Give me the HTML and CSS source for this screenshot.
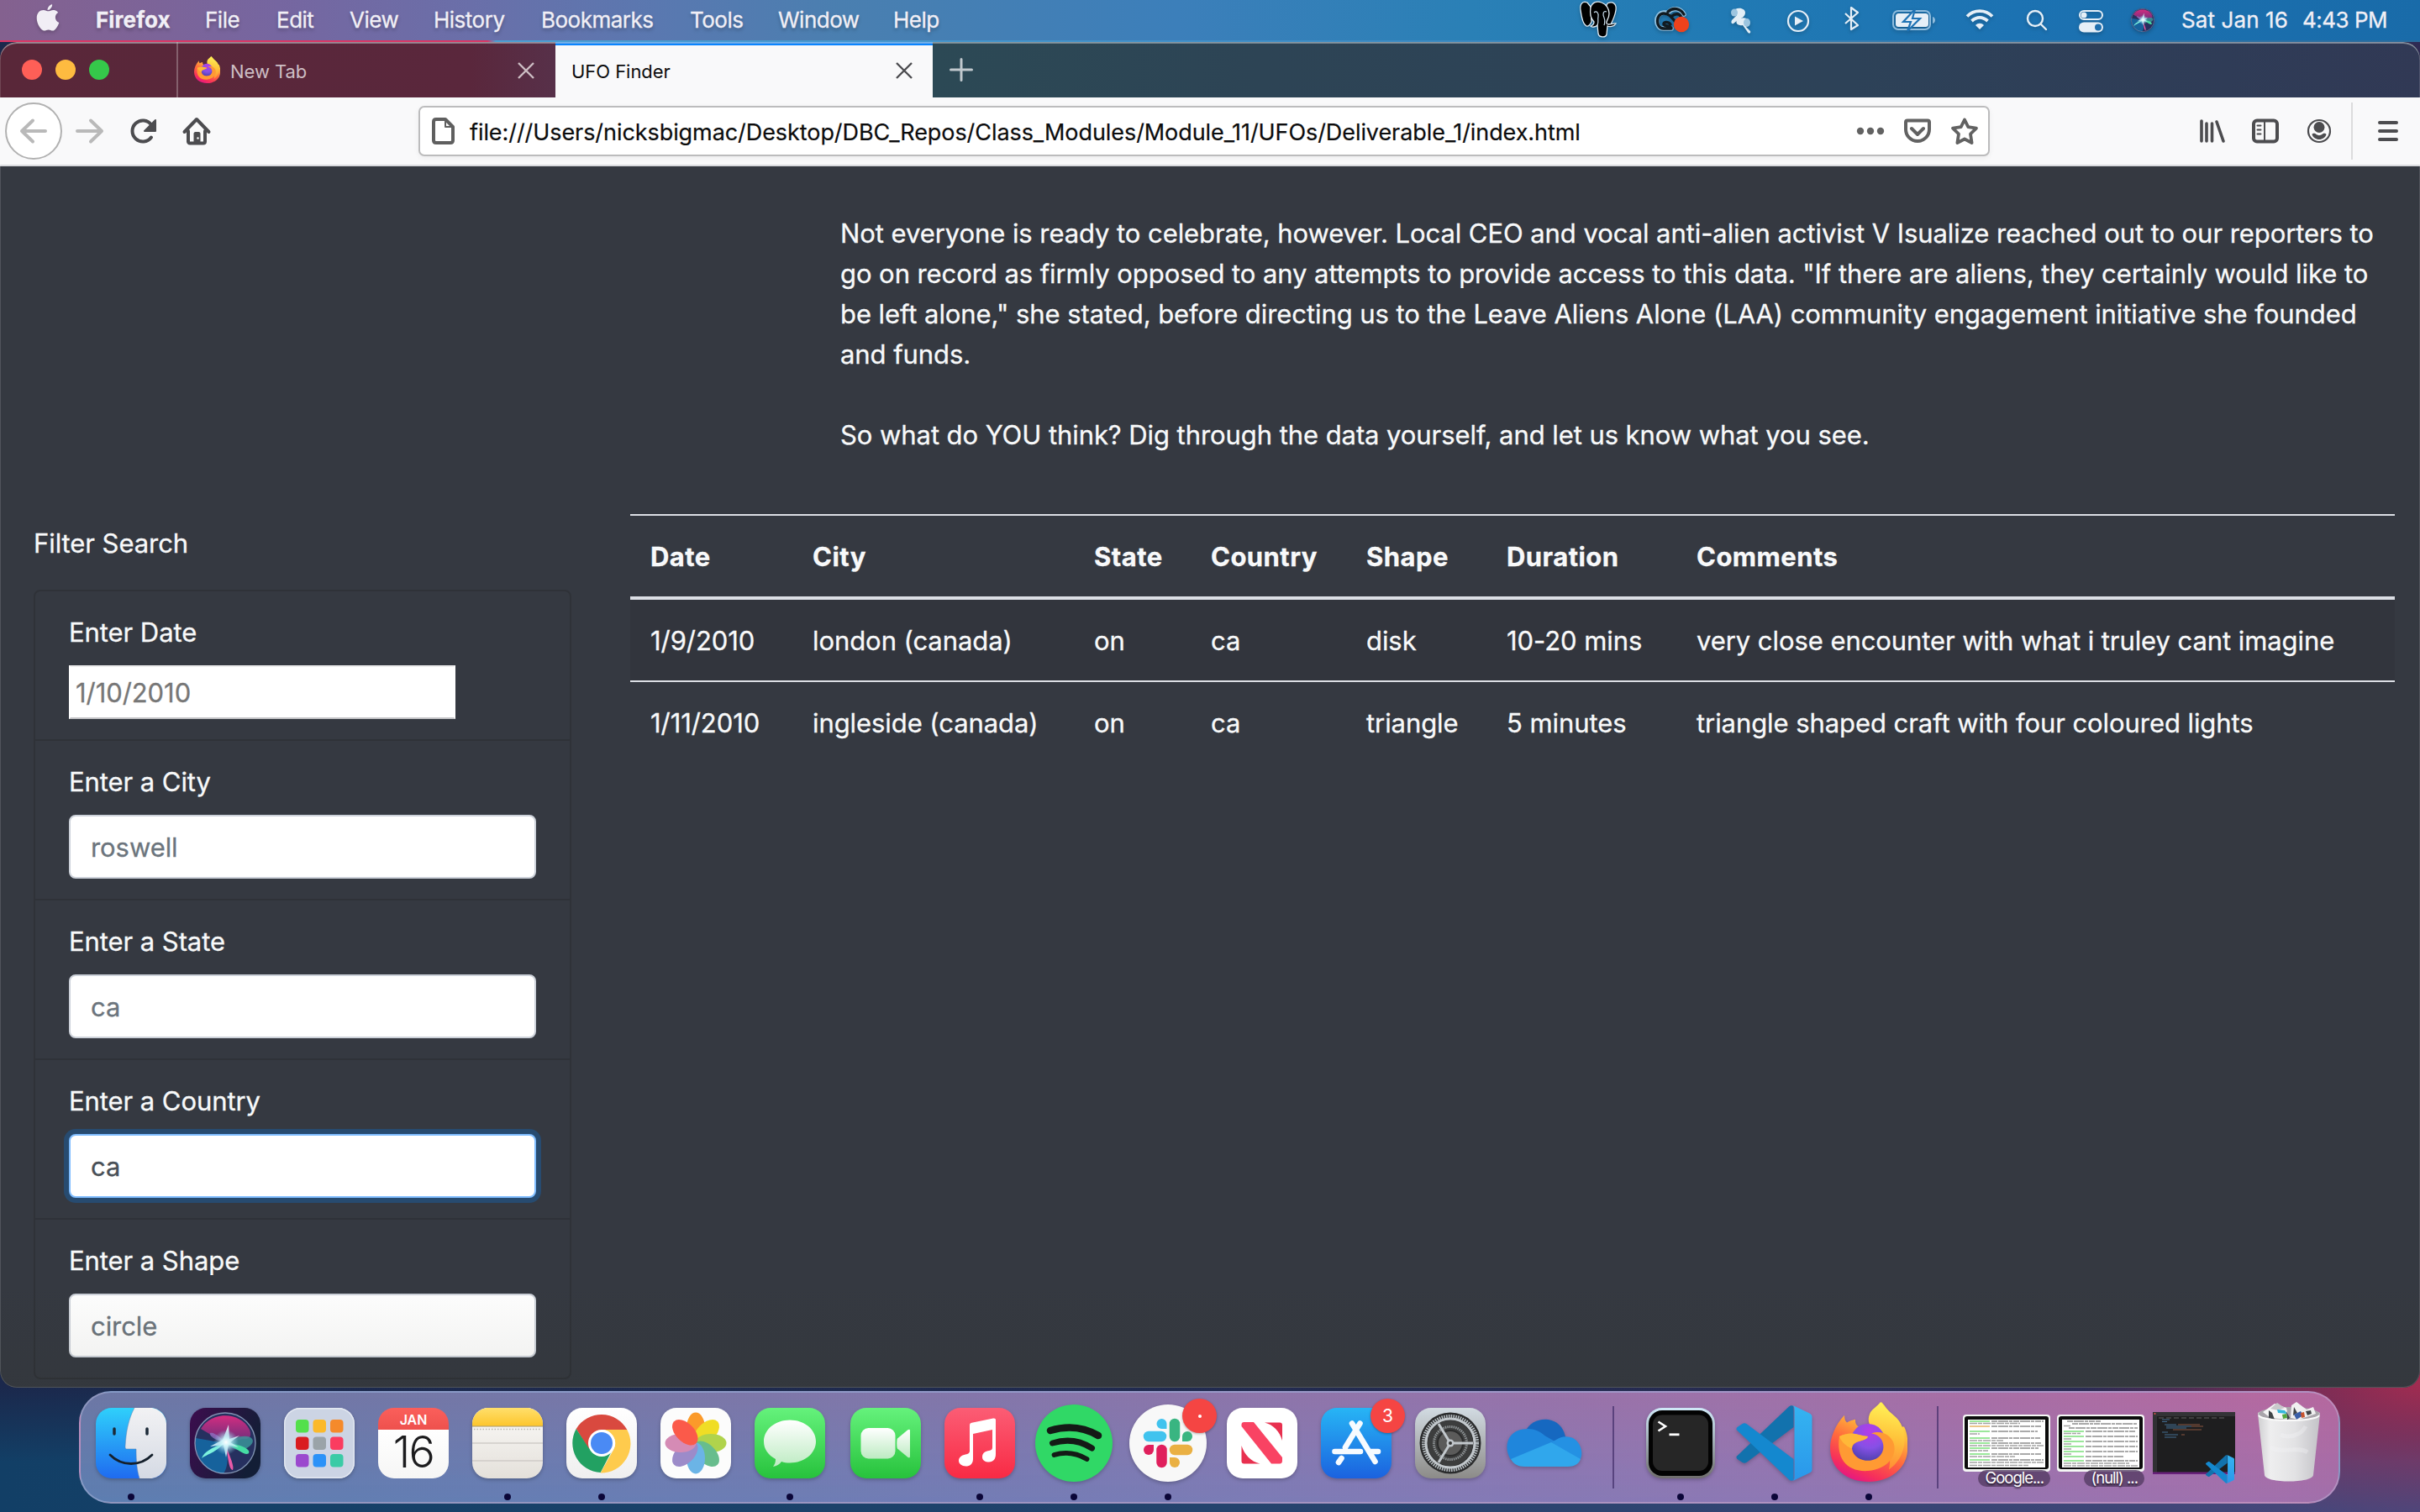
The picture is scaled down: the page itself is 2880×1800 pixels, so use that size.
FILE: index.html
```html
<!DOCTYPE html>
<html lang="en">
<head>
<meta charset="utf-8">
<title>UFO Finder</title>
<link rel="stylesheet" href="styles.css">
</head>
<body>

<!-- Shared artwork -->
<svg class="defs" width="0" height="0" aria-hidden="true">
  <defs>
    <linearGradient id="ffBody" x1=".75" y1="0" x2=".3" y2="1"><stop offset="0" stop-color="#fff14e"/><stop offset=".3" stop-color="#ffbd3a"/><stop offset=".58" stop-color="#ff6b3c"/><stop offset=".85" stop-color="#f62f5b"/><stop offset="1" stop-color="#e31587"/></linearGradient>
    <linearGradient id="ffTail" x1=".6" y1="0" x2=".5" y2="1"><stop offset="0" stop-color="#fff55a"/><stop offset=".5" stop-color="#ffc53b"/><stop offset="1" stop-color="#ff8a35"/></linearGradient>
    <radialGradient id="ffGlobe" cx=".55" cy=".2" r=".9"><stop offset="0" stop-color="#b53ce8"/><stop offset=".5" stop-color="#8650e6"/><stop offset="1" stop-color="#3f3d9e"/></radialGradient>
    <linearGradient id="vsLight" x1="0" y1="0" x2="0" y2="1"><stop offset="0" stop-color="#35b4f1"/><stop offset="1" stop-color="#2a97ea"/></linearGradient>
    <radialGradient id="siriGlow" cx=".5" cy=".5" r=".5"><stop offset="0" stop-color="#fff"/><stop offset=".35" stop-color="#c9f4fa" stop-opacity=".85"/><stop offset="1" stop-color="#7fc6e6" stop-opacity="0"/></radialGradient>
    <linearGradient id="siriPink" x1="0" y1="0" x2="0" y2="1"><stop offset="0" stop-color="#d62c80"/><stop offset="1" stop-color="#8a2f86" stop-opacity=".7"/></linearGradient>
    <symbol id="firefox" viewBox="0 0 92 132" preserveAspectRatio="none">
      <path fill="url(#ffBody)" d="M17 22c0 6 1 10 3 12 3-2 6-4 10-5 0 4 0 7 2 10l7 8 17 3 10-16c-6-5-12-14-9-20C57 10 60 4 61 0c5 7 7 14 14 22 6 6 9 13 10 19l3 0c4 10 5 24 4 40-1 28-20 51-46 51C20 132 0 110 0 76 0 60 6 38 17 22z"/>
      <path fill="url(#ffTail)" d="M60 0c7 16 22 24 26 42 6 22 2 52-16 70 4-24-2-52-14-62-10-8-12-20-9-30C49 12 56 8 60 0z"/>
      <ellipse cx="45" cy="67" rx="21" ry="31" fill="url(#ffGlobe)"/>
      <path fill="#ff9a33" d="M11 57c6-4 13-6 20-4 4 1 8 3 14 4-1 5-6 6-10 8-5 2-9 6-9 12 1 14 11 20 19 20 15-1 20-16 18-28-1-9-7-16-14-17 12-6 22 2 26 14 6 20-5 45-30 48C19 116 7 92 11 57z"/>
      <path fill="#ffb838" d="M11 57c6-4 13-6 20-4 4 1 8 3 14 4-1 5-6 6-10 8-6 2-9 5-9 12-8-4-13-12-15-20z"/>
    </symbol>
    <symbol id="vscode" viewBox="0 0 90 90">
      <path fill="#1272ad" d="M0 61 62 2c2-2 4-2 6-1v25L12 68c-2 1-3 1-5 0l-6-4c-1-1-1-2-1-3z"/>
      <path fill="#1488cf" d="M0 29c0-1 0-2 1-3l6-4c2-1 3-1 5 0l56 42v25c-2 1-4 1-6-1z"/>
      <path fill="url(#vsLight)" d="M67 0l19 9c3 1 4 3 4 5v62c0 2-1 4-4 5l-19 9c1-1 2-2 2-4V4c0-2-1-3-2-4z"/>
    </symbol>
    <symbol id="siri" viewBox="0 0 84 84">
      <circle cx="42" cy="42" r="36" fill="#26305f"/>
      <path d="M13 25C25 4 60 4 71 26c3 8 0 12-8 11L42 42z" fill="url(#siriPink)"/>
      <path d="M42 42 7 36C5 60 20 77 40 78c6-8 6-24 2-36z" fill="#1273b0" opacity=".75"/>
      <path d="M42 42c10-8 28-11 32-5s-8 12-10 13c-7 2-16-3-22-8z" fill="#3c9a9c" opacity=".8"/>
      <path d="M42 41c10 2 24 4 28 10 2 6-6 4-10 1z" fill="#46dca4"/>
      <path d="M42 41c2 10 12 28 9 33-5 0-6-20-9-33z" fill="#e85aa8"/>
      <path d="M42 41C30 54 22 54 14 60c4-10 18-14 28-19z" fill="#7cf2dd"/>
      <path d="M42 41C30 28 22 28 24 32c3 5 10 7 18 9z" fill="#8d6fc0" opacity=".8"/>
      <path d="M46 20l1 17 12-4-11 8 10 6-12-3-3 15-3-15-16 2 15-8z" fill="#e3fbff" opacity=".85"/>
      <circle cx="43" cy="41" r="15" fill="url(#siriGlow)"/>
      <circle cx="42" cy="42" r="36" fill="none" stroke="#a9c2dd" stroke-opacity=".7" stroke-width="1.400"/>
    </symbol>
  </defs>
</svg>

<!-- Menu bar -->
<header class="menubar">
  <svg class="mi" width="114" height="48" viewBox="1 0 114 48" fill="#f1eef5"><path d="M59.500 12c-1-3 1-6 3-7l0-1c0 4-2 7-3 8zM58.500 13.300c2 0 4.500-2.200 8-1 1.500.5 2.800 1.400 3.600 2.600-4.800 3-4 10 1.200 12-1.600 4.600-4.600 9.700-7.600 9.700-2 0-2.600-1.200-5-1.200s-3.200 1.200-5 1.200c-3.600 0-9-8-9-15.200 0-6.400 4-9.500 8-9.500 2.400 0 4.300 1.500 5.800 1.400zM57.500 12c0-3.400 2.800-6.400 5.600-6.700.3 3.500-2.600 6.500-5.600 6.700z"/></svg>
  <nav class="menus">
    <b>Firefox</b><span>File</span><span>Edit</span><span>View</span><span>History</span><span>Bookmarks</span><span>Tools</span><span>Window</span><span>Help</span>
  </nav>
  <div class="extras">
    <svg class="mi" width="70" height="50" viewBox="1870 0 70 50"><g fill="#000" stroke="#e3edf4" stroke-width="1.300"><path d="M1889 3c-6-2-9 2-8 9 1 8 3 17 7 19 3 1 5-3 6-5l-1-18z"/><path d="M1913 4c7-3 11 1 10 8s-4 13-6 17l-5 1-3-17z"/><path d="M1893 9c2-7 8-8 13-6 6 2 9 8 9 13 0 7-4 8-3 12 2 3 7-1 11 0-2 4-8 4-10 3l-1 10c-1 4-9 4-10-1l-1-10c-2 2-6 3-8 1 3-1 4-3 4-5-4-4-5-11-4-17z"/></g><path d="M1897 15c3-3 6 1 5 5s1 5-1 10M1912 14c-4-2-5 3-3 7s1 5 0 9" fill="none" stroke="#c7dceb" stroke-width="1.200"/></svg>
    <svg class="mi" width="100" height="50" viewBox="1940 0 100 50"><g fill="none" stroke-linecap="round"><path d="M1989 34h-9c-11 0-11-18 0-19h5c6-7 15-5 19 2" stroke="#8fc0e0" stroke-width="5.500"/><path d="M1989 34h-9c-10 0-10-18 0-18 6 0 9 4 13 9M1988 29c-3-4-9-3-8 0 2 3 5 0 9 4M1985 14c6-6 15-4 19 3M1990 19c3-3 8-3 10 0" stroke="#111a20" stroke-width="3.400"/></g><circle cx="2001" cy="29" r="9.200" fill="#ee421c"/></svg>
    <svg class="mi" width="64" height="50" viewBox="2040 0 64 50" fill="#e2eef6"><path d="M2065 11c6-3 12 0 12 4 0 5-5 7-9 9l-5 4c-3 1-3-2-2-4l6-6z"/><ellipse cx="2064" cy="15" rx="4" ry="4.500" fill="#9cc5e0"/><path d="M2067 24c5-4 12-3 14 0l-3 8 5 5c1 3-2 4-4 0l-5-7c-6 1-9-2-7-6z"/><ellipse cx="2079" cy="27" rx="4" ry="5" fill="#9cc5e0"/></svg>
    <svg class="mi" width="72" height="50" viewBox="2104 0 72 50"><circle cx="2140" cy="25" r="12" fill="none" stroke="#e6eff7" stroke-width="2.200"/><path d="M2136 19.500v11l10-5.500z" fill="#e6eff7"/></svg>
    <svg class="mi" width="56" height="50" viewBox="2176 0 56 50"><path d="M2196 16l15 14-8 5V9l8 6-15 13" fill="none" stroke="#e6eff7" stroke-width="2.200" stroke-linejoin="round"/></svg>
    <svg class="mi" width="88" height="50" viewBox="2232 0 88 50"><rect x="2253" y="13" width="44" height="22" rx="6" fill="none" stroke="#8fbcdd" stroke-width="2"/><path d="M2300 20c4 1 4 7 0 8z" fill="#8fbcdd"/><rect x="2256" y="16" width="39" height="16" rx="3.500" fill="#e6eff7"/><path d="M2279 11l-14 15h9l-4 11 15-15h-9z" fill="#e6eff7" stroke="#1f73b4" stroke-width="2.200"/></svg>
    <svg class="mi" width="70" height="50" viewBox="2320 0 70 50"><g fill="none" stroke="#e6eff7" stroke-width="3.800"><path d="M2341 19.500c8-8.500 22-8.500 30 0"/><path d="M2346.500 25c6-5.500 13-5.500 19 0"/></g><path d="M2351 30c3-3 7-3 10 0l-5 5z" fill="#e6eff7"/></svg>
    <svg class="mi" width="60" height="50" viewBox="2390 0 60 50" fill="none" stroke="#e6eff7" stroke-width="2.400" stroke-linecap="round"><circle cx="2422" cy="22" r="9"/><path d="M2429 29l6 6"/></svg>
    <svg class="mi" width="70" height="50" viewBox="2450 0 70 50"><rect x="2475" y="13" width="27" height="10" rx="5" fill="none" stroke="#e6eff7" stroke-width="2"/><circle cx="2480" cy="18" r="3.500" fill="#e6eff7"/><rect x="2474" y="26.500" width="29" height="12" rx="6" fill="#e6eff7"/><circle cx="2497" cy="32.500" r="4" fill="#1f6fae"/></svg>
    <svg class="mi" width="76" height="50" viewBox="2520 0 76 50"><circle cx="2550" cy="24" r="14" fill="#2b2350"/><use href="#siri" x="2534" y="8" width="32" height="32"/></svg>
    <time class="clock"><span>Sat Jan 16</span><span>4:43 PM</span></time>
  </div>
</header>
<div class="wallstrip"></div>

<!-- Browser window -->
<main class="window">
  <div class="tabbar">
    <div class="lights"><i class="red"></i><i class="amber"></i><i class="green"></i></div>
    <div class="tab">
      <svg width="31" height="32"><use href="#firefox" width="31" height="32"/></svg>
      <span>New Tab</span>
      <svg class="close" width="20" height="20" viewBox="0 0 20 20"><path d="M1 1l18 18M19 1L1 19"/></svg>
    </div>
    <div class="tab active">
      <span>UFO Finder</span>
      <svg class="close" width="20" height="20" viewBox="0 0 20 20"><path d="M1 1l18 18M19 1L1 19"/></svg>
    </div>
    <svg class="plus" width="28" height="28" viewBox="0 0 28 28"><path d="M14 1.500v25M1.500 14h25"/></svg>
  </div>

  <div class="toolbar">
    <svg width="498" height="80" viewBox="0 116 498 80" fill="none" stroke-linecap="round" stroke-linejoin="round">
      <circle cx="40" cy="156" r="33" fill="#fff" stroke="#b1b1b1" stroke-width="2"/>
      <path d="M54 156H26M39 143.500L26 156l13 12.500" stroke="#b9b9b9" stroke-width="4"/>
      <path d="M92 156h28M108 143.500l13 12.500-13 12.500" stroke="#b9b9b9" stroke-width="4"/>
      <path d="M180 163.500a12.500 12.500 0 1 1 0-15" stroke="#4c4c4f" stroke-width="4"/><path d="M185 143v13h-13z" fill="#4c4c4f" stroke="#4c4c4f" stroke-width="2"/>
      <path d="M219.500 157L234 142l14.500 15M224 156v12.500c0 1 .8 2 2 2h16c1.200 0 2-.8 2-2V156" stroke="#4c4c4f" stroke-width="4"/><path d="M230.500 171v-12c0-1 .8-2 2-2h4c1 0 2 .8 2 2v12z" fill="#4c4c4f"/><circle cx="235.500" cy="164.500" r="1.200" fill="#f9f9fa"/>
    </svg>
    <div class="urlbar">
      <svg width="32" height="36" viewBox="0 0 32 36" fill="none" stroke="#5f5f5f" stroke-width="4" stroke-linejoin="round"><path d="M7 4h11l9 9v16c0 2-1 3-3 3H7c-2 0-3-1-3-3V7c0-2 1-3 3-3z"/><path d="M18 4v9h9" stroke-width="2"/></svg>
      <span class="url">file:///Users/nicksbigmac/Desktop/DBC_Repos/Class_Modules/Module_11/UFOs/Deliverable_1/index.html</span>
      <svg width="158" height="56" viewBox="2208 128 158 56" fill="none" stroke="#626262" stroke-width="4" stroke-linejoin="round" stroke-linecap="round">
        <g fill="#626262" stroke="none"><circle cx="2214" cy="156" r="4.200"/><circle cx="2226" cy="156" r="4.200"/><circle cx="2238" cy="156" r="4.200"/></g>
        <path d="M2270 143.500h24c1.500 0 2 .5 2 2V154a14 14 0 0 1-28 0v-8.500c0-1.500.5-2 2-2z"/><path d="M2275 153l7 7 7-7"/>
        <path d="M2338 142.500l4.300 8.700 9.700 1.400-7 6.900 1.600 10.500-8.600-4.500-8.600 4.500 1.600-10.500-7-6.900 9.700-1.400z" stroke-width="3.800"/>
      </svg>
    </div>
    <svg width="512" height="80" viewBox="2368 116 512 80" fill="none" stroke="#4c4c4f" stroke-linecap="round" stroke-linejoin="round">
      <path d="M2620 144v24M2626 147v21M2632.500 147v21M2638 145l8 23" stroke-width="3.600"/>
      <rect x="2682" y="143.500" width="28" height="25" rx="4" stroke-width="4"/><path d="M2695 144v24M2686.500 149.500h4M2686.500 154.500h4M2686.500 159.500h4" stroke-width="2"/>
      <circle cx="2760" cy="156" r="13" stroke-width="2.200"/><circle cx="2760" cy="151.500" r="6.500" fill="#4c4c4f" stroke="none"/><path d="M2751.500 160c1.500-2 4-1 5 0 2 1.500 5 1.500 7 0 1-1 3.500-2 5 0-1 3.500-4.500 6-8.500 6s-7.500-2.500-8.500-6z" fill="#4c4c4f" stroke="none"/>
      <path d="M2799 122v68" stroke="#dcdcdd" stroke-width="2" stroke-linecap="butt"/>
      <path d="M2832 146h20M2832 156h20M2832 166h20" stroke-width="4"/>
    </svg>
  </div>

  <div class="page">
    <article class="story">
      <p>Not everyone is ready to celebrate, however. Local CEO and vocal anti-alien activist V Isualize reached out to our reporters to<br>go on record as firmly opposed to any attempts to provide access to this data. "If there are aliens, they certainly would like to<br>be left alone," she stated, before directing us to the Leave Aliens Alone (LAA) community engagement initiative she founded<br>and funds.</p>
      <p>So what do YOU think? Dig through the data yourself, and let us know what you see.</p>
    </article>

    <div class="results">
      <form class="filters">
        <p class="heading">Filter Search</p>
        <ul class="list">
          <li><label for="date">Enter Date</label><input class="plain" id="date" type="text" placeholder="1/10/2010"></li>
          <li><label for="city">Enter a City</label><input class="control" id="city" type="text" placeholder="roswell"></li>
          <li><label for="state">Enter a State</label><input class="control" id="state" type="text" placeholder="ca"></li>
          <li><label for="country">Enter a Country</label><input class="control focused" id="country" type="text" value="ca"></li>
          <li><label for="shape">Enter a Shape</label><input class="control" id="shape" type="text" placeholder="circle"></li>
        </ul>
      </form>
      <table class="sightings">
        <colgroup><col class="c1"><col class="c2"><col class="c3"><col class="c4"><col class="c5"><col class="c6"><col></colgroup>
        <thead><tr><th>Date</th><th>City</th><th>State</th><th>Country</th><th>Shape</th><th>Duration</th><th>Comments</th></tr></thead>
        <tbody>
          <tr><td>1/9/2010</td><td>london (canada)</td><td>on</td><td>ca</td><td>disk</td><td>10-20 mins</td><td>very close encounter with what i truley cant imagine</td></tr>
          <tr><td>1/11/2010</td><td>ingleside (canada)</td><td>on</td><td>ca</td><td>triangle</td><td>5 minutes</td><td>triangle shaped craft with four coloured lights</td></tr>
        </tbody>
      </table>
    </div>
  </div>
</main>

<!-- Dock -->
<footer class="desk">
  <div class="dock">
    <div class="app running"><svg viewBox="0 0 84 84">
      <defs><linearGradient id="fb" x2="0" y2="1"><stop stop-color="#2fd0fb"/><stop offset="1" stop-color="#1f6bf0"/></linearGradient><linearGradient id="fw" x2="0" y2="1"><stop stop-color="#f2f2f4"/><stop offset="1" stop-color="#d5dae4"/></linearGradient></defs>
      <rect width="84" height="84" rx="19" fill="url(#fb)"/><path d="M46 0h19c10 0 19 9 19 19v46c0 10-9 19-19 19H52c-3-10-4-20-4-35H36c-1-1-1-2-1-3 1-18 4-33 11-46z" fill="url(#fw)"/>
      <path d="M46 0c-7 13-10 28-11 46 0 2 0 3 2 3h11c0 15 1 25 4 35" fill="none" stroke="#5a7fae" stroke-opacity=".5"/>
      <path d="M22 25v6M61 25v6" stroke="#1c2a38" stroke-width="3.500" stroke-linecap="round"/><path d="M17 56c14 14 36 14 50 0" fill="none" stroke="#15202c" stroke-width="2.800" stroke-linecap="round"/></svg></div>
    <div class="app"><svg viewBox="0 0 84 84"><defs><linearGradient id="sb" x2="1" y2=".4"><stop stop-color="#3c0d4e"/><stop offset="1" stop-color="#131e36"/></linearGradient></defs><rect width="84" height="84" rx="19" fill="url(#sb)"/><use href="#siri" width="84" height="84"/></svg></div>
    <div class="app"><svg viewBox="0 0 84 84"><rect width="84" height="84" rx="19" fill="#ccd4e4"/><rect x=".7" y=".7" width="82.600" height="82.600" rx="18.500" fill="none" stroke="#e4e9f2" stroke-width="1.400"/>
      <rect x="14" y="14" width="15.500" height="15.500" rx="4" fill="#53e04b"/><rect x="34.500" y="14" width="15.500" height="15.500" rx="4" fill="#fbb92b"/><rect x="55" y="14" width="15.500" height="15.500" rx="4" fill="#f58a2b"/>
      <rect x="14" y="34.500" width="15.500" height="15.500" rx="4" fill="#d91c20"/><rect x="34.500" y="34.500" width="15.500" height="15.500" rx="4" fill="#9aa3a8"/><rect x="55" y="34.500" width="15.500" height="15.500" rx="4" fill="#fa3c60"/>
      <rect x="14" y="55" width="15.500" height="15.500" rx="4" fill="#9b48ce"/><rect x="34.500" y="55" width="15.500" height="15.500" rx="4" fill="#2b92f8"/><rect x="55" y="55" width="15.500" height="15.500" rx="4" fill="#3acba6"/></svg></div>
    <div class="app calendar"><span class="month">JAN</span><span class="day">16</span></div>
    <div class="app running"><svg viewBox="0 0 84 84"><defs><linearGradient id="ny" x2="0" y2="1"><stop stop-color="#ffdf6b"/><stop offset="1" stop-color="#fdc52c"/></linearGradient><linearGradient id="nw" x2="0" y2="1"><stop stop-color="#fbfaf8"/><stop offset="1" stop-color="#e4e0da"/></linearGradient></defs><rect width="84" height="84" rx="19" fill="url(#nw)"/><path d="M0 22v-3C0 9 9 0 19 0h46c10 0 19 9 19 19v3z" fill="url(#ny)"/><path d="M0 22h84" stroke="#a99a70" stroke-width="1"/><path d="M2 25.500h80" stroke="#b9b6b1" stroke-width="1.600" stroke-dasharray="1.500 2"/><path d="M0 42h84M0 63h84" stroke="#cfccc8" stroke-width="1.500"/></svg></div>
    <div class="app running"><svg viewBox="0 0 84 84"><defs><linearGradient id="cw" x2="0" y2="1"><stop stop-color="#fff"/><stop offset="1" stop-color="#efefef"/></linearGradient></defs><rect width="84" height="84" rx="19" fill="url(#cw)"/>
      <path d="M11.700 25A35 35 0 0 1 72.300 26H42L27 50z" fill="#d9493f"/><path d="M11.700 25a35 35 0 0 0 29 52l14-27-28-2z" fill="#22a162"/><path d="M72.300 26a35 35 0 0 1-31.600 51.500L56 50a16 16 0 0 0-14-24z" fill="#fecb4d"/>
      <circle cx="42" cy="42" r="16" fill="#fff"/><circle cx="42" cy="42" r="13" fill="#4a8af4"/></svg></div>
    <div class="app"><svg viewBox="0 0 84 84"><rect width="84" height="84" rx="19" fill="#fcfcfc"/>
      <g class="petals"><ellipse cx="42" cy="24" rx="11" ry="18.500" fill="#fb9a2a"/><ellipse cx="42" cy="24" rx="11" ry="18.500" fill="#f0dd25" transform="rotate(45 42 42)"/><ellipse cx="42" cy="24" rx="11" ry="18.500" fill="#b0d34c" transform="rotate(90 42 42)"/><ellipse cx="42" cy="24" rx="11" ry="18.500" fill="#68bd8d" transform="rotate(135 42 42)"/><ellipse cx="42" cy="24" rx="11" ry="18.500" fill="#6bb4e6" transform="rotate(180 42 42)"/><ellipse cx="42" cy="24" rx="11" ry="18.500" fill="#9c8bc9" transform="rotate(225 42 42)"/><ellipse cx="42" cy="24" rx="11" ry="18.500" fill="#d58bb5" transform="rotate(270 42 42)"/><ellipse cx="42" cy="24" rx="11" ry="18.500" fill="#fb5a4a" transform="rotate(315 42 42)"/></g></svg></div>
    <div class="app running"><svg viewBox="0 0 84 84"><defs><linearGradient id="mg" x2="0" y2="1"><stop stop-color="#65f27c"/><stop offset="1" stop-color="#27c23c"/></linearGradient><linearGradient id="mw" x2="0" y2="1"><stop stop-color="#fff"/><stop offset="1" stop-color="#bdebc2"/></linearGradient></defs><rect width="84" height="84" rx="19" fill="url(#mg)"/><path d="M42 14.500c17 0 31 11 31 25.500S59 65.500 42 65.500c-4 0-7-.5-10-1.500-2 3-6 5.500-10 6 2-3 3-5 3-9-9-5-14-12-14-21 0-14.500 14-25.500 31-25.500z" fill="url(#mw)"/></svg></div>
    <div class="app nudge"><svg viewBox="0 0 84 84"><rect width="84" height="84" rx="19" fill="url(#mg)"/><rect x="12.500" y="24" width="41" height="36.500" rx="9" fill="url(#mw)"/><path d="M56 36.500 68 26.500c2-1.500 3-1 3 1v30c0 2-1 2.500-3 1L56 48.500c-1-1-1-11 0-12z" fill="url(#mw)"/></svg></div>
    <div class="app running"><svg viewBox="0 0 84 84"><defs><linearGradient id="mu" x2="0" y2="1"><stop stop-color="#fb5d75"/><stop offset="1" stop-color="#f92a44"/></linearGradient></defs><rect width="84" height="84" rx="19" fill="url(#mu)"/><path d="M58 12.500c2-.4 3 .3 3 2V55c0 6-3 9.500-8 9.500-4.500 0-8-2-8-6 0-5 4-7 8-7.500 3-.5 4-1.500 4-4V26L34 31v30c0 6-4 8.500-8.500 8.500-5 0-8.500-3-8.500-6.500 0-4 3-6.500 8-7.500 3-.5 5-1.500 5-4V21c0-2 .5-2.700 2.500-3.200z" fill="#fff"/></svg></div>
    <div class="app running"><svg viewBox="0 0 84 84"><circle cx="42" cy="42" r="46" fill="#30d866"/><g fill="none" stroke="#141a16" stroke-linecap="round"><path d="M14 27c20-6 40-4 57 6" stroke-width="8.500"/><path d="M16.500 42c16-5 33-3 47 6" stroke-width="7"/><path d="M18.500 56c14-4 27-2 39 5" stroke-width="5.800"/></g></svg></div>
    <div class="app running"><svg viewBox="0 0 84 84"><circle cx="42" cy="42" r="46" fill="#f8f8f8"/><g stroke-linecap="round" stroke-width="12.500"><path d="M19 34h15" stroke="#41c3ee"/><path d="M50 19v15" stroke="#39b581"/><path d="M50 50h15" stroke="#eab043"/><path d="M34.500 50v15" stroke="#e01f5c"/></g><path d="M40.500 25v-6a6 6 0 1 0-6 6z" fill="#41c3ee"/><path d="M59 40h6a6 6 0 1 0-6-6z" fill="#39b581"/><path d="M44 59v6a6 6 0 1 0 6-6z" fill="#eab043"/><path d="M25 44h-6a6 6 0 1 0 6 6z" fill="#e01f5c"/></svg><span class="badge"><i></i></span></div>
    <div class="app"><svg viewBox="0 0 84 84"><rect width="84" height="84" rx="19" fill="#fff"/><path d="M17.500 20c0-2 1-3 3-3H32l34 42v4c0 2-1 3.500-3 3.500H53L17.500 22z" fill="#f94363"/><path d="M45 17.500h18c2 0 3 1 3 3V39C63 28 55 20 45 17.500zM17.500 45C21 56 29 64 39.500 66.500h-19c-2 0-3-1-3-3z" fill="#e8304f"/></svg></div>
    <div class="app"><svg viewBox="0 0 84 84"><defs><linearGradient id="as" x2="0" y2="1"><stop stop-color="#27b5f5"/><stop offset="1" stop-color="#1b62df"/></linearGradient></defs><rect width="84" height="84" rx="19" fill="url(#as)"/><g stroke="#f7fbff" stroke-linecap="round" stroke-width="6.600"><path d="M46.500 18.500 29 47M37 18.500 64.500 64M16.500 52H47M58 52h10M24.500 60l-3.500 5"/></g></svg><span class="badge">3</span></div>
    <div class="app"><svg viewBox="0 0 84 84"><defs><linearGradient id="sp" x2="0" y2="1"><stop stop-color="#d2dbe2"/><stop offset="1" stop-color="#8c8b88"/></linearGradient></defs><rect width="84" height="84" rx="19" fill="url(#sp)"/><circle cx="42" cy="42" r="36.500" fill="#2a2b2c"/><circle cx="42" cy="42" r="32" fill="none" stroke="#b6bdc1" stroke-width="4" stroke-dasharray="1.600 1.200"/><circle cx="42" cy="42" r="29" fill="none" stroke="#c2c8cc" stroke-width="3"/><circle cx="42" cy="42" r="27" fill="#3c3d3d"/><circle cx="42" cy="42" r="19.500" fill="none" stroke="#8f9496" stroke-width="3" stroke-dasharray="1.500 1"/><circle cx="42" cy="42" r="15" fill="#5b5b5a" stroke="#2b2c2c" stroke-width="2"/><path d="M42 42h27M42 42 28 19M42 42 28 65" stroke="#c2c8cc" stroke-width="3"/><circle cx="42" cy="42" r="4.500" fill="#c2c8cc"/><circle cx="42" cy="42" r="2" fill="#333"/></svg></div>
    <div class="app"><svg viewBox="0 0 84 84"><path d="M20 27c8-18 42-20 47 8L55 50 40 42z" fill="#1668c0"/><path d="M16 25.500c10-2 20 1 27 8l16 9L2 62C-8 46-1 28 16 25.500z" fill="#1f86dc"/><path d="M56 38c8-6 24-6 29 9 2 6 2 12-2 17L50 41z" fill="#2491e3"/><path d="M50 41 2 61c3 6 9 9 16 9h52c7 0 13-3 15-9z" fill="#30a7ec"/></svg></div>
    <i class="sep"></i>
    <div class="app running"><svg viewBox="0 0 84 84"><defs><linearGradient id="tm" x2="0" y2="1"><stop stop-color="#cfe9f8"/><stop offset="1" stop-color="#6f6d6c"/></linearGradient></defs><rect x="1" y="0" width="82" height="84" rx="19" fill="url(#tm)"/><rect x="4" y="3" width="76" height="78" rx="16" fill="#030303"/><rect x="9" y="8.500" width="66" height="66.500" rx="11" fill="#262626"/><path d="M15.500 16.500l8.500 5.500-8.500 5.500" fill="none" stroke="#fff" stroke-width="2.600"/><path d="M28.500 31.800h12" stroke="#fff" stroke-width="2.800"/></svg></div>
    <div class="app running"><svg viewBox="0 0 84 84"><use href="#vscode" x="-4" y="-3" width="91" height="90"/></svg></div>
    <div class="app running"><svg viewBox="0 0 84 84"><use href="#firefox" x="-4" y="-7" width="92" height="95"/></svg></div>
    <i class="sep second"></i>
    <figure class="thumb terminal">
      <svg viewBox="0 0 104 68"><rect width="104" height="68" rx="4" fill="#f4f6f4"/><rect x="2" y="2" width="100" height="63" rx="3" fill="#0b0b0b"/><rect x="6" y="6" width="92" height="57" fill="#fff"/><g stroke-width="1.600"><path d="M34 8h62M34 14h60M34 20h55M34 28h58M34 34h60M34 40h56M34 47h60M34 54h62" stroke="#8f8f8f" stroke-dasharray="7 1 12 1 4 1"/><path d="M8 10.500h60M8 23h12M8 31h40M8 37h88M8 43h22M8 50h54M8 57h88M8 60.500h70" stroke="#a4a4a4" stroke-dasharray="9 1 5 1"/><path d="M8 8h24M8 20h24M8 28h24M8 34h24M8 40h24M8 47h24M8 54h24" stroke="#7be07b"/><path d="M8 14h24" stroke="#e8b86c"/></g></svg>
      <figcaption>Google...</figcaption>
    </figure>
    <figure class="thumb terminal">
      <svg viewBox="0 0 104 68"><rect width="104" height="68" rx="4" fill="#f4f6f4"/><rect x="2" y="2" width="100" height="63" rx="3" fill="#0b0b0b"/><rect x="6" y="6" width="92" height="57" fill="#fff"/><g stroke-width="1.600"><path d="M12 8h40M18 11h78M14 16h82M34 20h60M34 26h62M34 32h62M34 38h62M34 44h62M34 50h45M34 55h62" stroke="#8f8f8f" stroke-dasharray="7 1 12 1 4 1"/><path d="M8 13.500h8M8 22.500h20M8 29h10M8 35h10M8 41h10M8 47h10M8 58h78M8 61h88" stroke="#a4a4a4" stroke-dasharray="9 1 5 1"/><path d="M8 20h24M8 26h24M8 32h24M8 38h24M8 44h24M8 50h24M8 55h24" stroke="#7be07b"/></g></svg>
      <figcaption>(null) ...</figcaption>
    </figure>
    <figure class="thumb code">
      <svg viewBox="0 0 98 84"><rect width="98" height="74" rx="1.500" fill="#1e1e1f"/><rect width="98" height="5" fill="#333336"/><rect y="5" width="5" height="67" fill="#303033"/><rect y="71.500" width="98" height="2.500" fill="#68217a"/><circle cx="2.500" cy="2" r="1" fill="#e5564c"/><g stroke-width="1.200" opacity=".75"><path d="M7 7h80" stroke="#777" stroke-dasharray="6 3"/><path d="M11 9h9M11 11.500h6M14 15h14M16 17h30M16 19h24M11 24h7M14 27h16M14 30h14" stroke="#4f88b6"/><path d="M30 15h26M46 17h14M24 21h34M34 27h4" stroke="#b06a4c"/></g><use href="#vscode" x="62" y="51" width="36" height="34"/></svg>
    </figure>
    <svg class="trash" width="76" height="98" viewBox="0 0 76 98"><defs><linearGradient id="bn"><stop stop-color="#cfcfd1"/><stop offset=".2" stop-color="#eeeeef"/><stop offset=".6" stop-color="#e2e2e4"/><stop offset="1" stop-color="#c3c2c7"/></linearGradient></defs><path d="M1 15c0-8 74-8 74 0l-8 73c-1 10-57 10-58 0z" fill="url(#bn)"/><ellipse cx="38" cy="15" rx="36" ry="8" fill="#a9a5ab"/><path d="M7 13l14-10 14 5 3 14-22-2z" fill="#f6f6f6"/><path d="M16 9l8-7 9 6-8 3z" fill="#c9c9cb"/><path d="M41 5l6-4 12 9 8-3 3 8-20 7-10-2z" fill="#f0f0f0"/><path d="M24 10l9 1 3 4-11-1z" fill="#35b7dc"/><path d="M14 11l4 3 3 8-7-2zM35 12l4 8-3 3zM44 7l4 7-5 3zM58 12l6-1 1 4-5 2z" fill="#414549"/><path d="M44 16l8-4 3 5-8 5z" fill="#3b5fa8"/><path d="M52 14l4-1 1 6-4 1z" fill="#c8552f"/><path d="M30 16l5-1 1 5-5 1z" fill="#51a83e"/><path d="M2 17c4 8 68 8 72 0" fill="none" stroke="#fafafa" stroke-width="2"/><path d="M28 40c8 4 24 2 30-10M16 55c12 8 34-2 44 6" fill="none" stroke="#f4f4f5" stroke-width="5" opacity=".35"/></svg>
  </div>
</footer>
</body>
</html>
```
FILE: styles.css
```css
* { box-sizing: border-box; }

body {
  margin: 0;
  width: 2880px;
  height: 1800px;
  overflow: hidden;
  display: flex;
  flex-direction: column;
  font-family: Inter, "Liberation Sans", sans-serif;
  background:
    radial-gradient(ellipse 420px 170px at 2900px 1640px, #a92c50 0%, rgba(150, 45, 85, .75) 35%, rgba(90, 60, 110, 0) 100%),
    linear-gradient(to bottom, rgba(32, 28, 62, .65) 1650px, rgba(30, 35, 80, 0) 1740px),
    linear-gradient(to right, #123f66 0, #1c426a 1000px, #2d4470 1900px, #4a477c 2880px);
}

svg { display: block; flex: none; overflow: visible; }
.defs { width: 0; height: 0; position: absolute; }

/* Menu bar */
.menubar {
  flex: none;
  height: 48px;
  display: flex;
  background: linear-gradient(to right, #84618f 0, #7666a0 330px, #6a6fa9 560px, #5a78b0 780px, #4a7fb0 1000px, #3c7fba 1400px, #2a80b6 1750px, #217ab4 2050px, #1c72b2 2400px, #196ba9 2880px);
  color: #f1eff6;
  font-size: 26px;
  letter-spacing: -.5px;
}
.mi { filter: drop-shadow(0 2px 2px rgba(0, 0, 0, .22)); }
.menus {
  display: grid;
  grid-template-columns: 130px 85px 87px 100px 128px 177px 105px 137px 100px;
  line-height: 48px;
  text-shadow: 0 3px 4px rgba(0, 0, 0, .25);
  -webkit-text-stroke: .3px;
}
.menus b { letter-spacing: .1px; }
.extras { margin-left: auto; display: flex; }
.clock {
  display: flex;
  gap: 17px;
  width: 284px;
  line-height: 47px;
  white-space: nowrap;
  -webkit-text-stroke: .3px;
}
.clock span:first-child { letter-spacing: .1px; }
.wallstrip {
  flex: none;
  height: 2px;
  background: linear-gradient(to right, #da3564 0, #da3564 580px, #4a9fd4 590px, #3f8fc8 1500px, #2a6b9c 2880px);
}

/* Browser window */
.window {
  flex: none;
  position: relative;
  height: 1602px;
  display: flex;
  flex-direction: column;
  border-radius: 20px;
  overflow: hidden;
  background: #353941;
}
.window::after {
  content: "";
  position: absolute;
  inset: 0;
  border-radius: 20px;
  pointer-events: none;
  background: linear-gradient(to bottom, transparent calc(100% - 130px), rgba(35, 40, 20, .08));
  box-shadow: inset 0 0 0 1px rgba(255, 255, 255, .14), inset 0 2px 0 rgba(190, 200, 205, .5);
}
.tabbar {
  flex: none;
  height: 66px;
  display: flex;
  background: linear-gradient(to right, #592739 0, #5a273c 560px, #573049 661px, #2c4955 1111px, #2d4455 1500px, #2d4258 2200px, #2f3c57 2650px, #313955 2880px);
}
.lights {
  width: 210px;
  padding: 21px 0 0 26px;
  display: flex;
  gap: 16px;
}
.lights i { width: 24px; height: 24px; border-radius: 50%; }
.lights .red { background: #fe5f57; }
.lights .amber { background: #febb40; }
.lights .green { background: #35c84a; }
.tab {
  width: 451px;
  display: flex;
  align-items: center;
  padding: 0 25px 0 19px;
  border-left: 2px solid #84606d;
  color: #cdbec4;
  font-size: 22px;
  letter-spacing: -.05px;
}
.tab span { margin: 4px auto 0 12px; }
.tab .close { margin-top: 2px; fill: none; stroke: #cdbec4; stroke-width: 2.4; }
.tab.active {
  width: 449px;
  padding: 0 24px 0 7px;
  border-left: 0;
  border-top: 4px solid #0a84ff;
  background: #f9f9fa;
  color: #0c0c0d;
}
.tab.active span { margin-top: 0; }
.tab.active .close { margin-top: -2px; stroke: #4c4c4f; }
.plus { margin: 19px 0 0 20px; fill: none; stroke: #c1c9ce; stroke-width: 3; stroke-linecap: round; }

.toolbar {
  flex: none;
  height: 82px;
  display: flex;
  background: #f9f9fa;
  border-bottom: 2px solid #d9dade;
}
.urlbar {
  width: 1870px;
  height: 60px;
  margin-top: 10px;
  padding-left: 12px;
  display: flex;
  align-items: center;
  background: #fff;
  border: 2px solid #bcbcbd;
  border-radius: 7px;
  box-shadow: 0 2px 6px rgba(0, 0, 0, .06);
}
.url {
  margin: 2px auto 0 15px;
  color: #0c0c0d;
  font-size: 27px;
  letter-spacing: -.07px;
  white-space: nowrap;
  -webkit-text-stroke: .2px;
}

/* Page */
.page {
  flex: 1;
  padding: 56px 30px 0 40px;
  color: #f8f9fa;
  font-size: 31px;
  line-height: 48px;
  letter-spacing: -.07px;
  -webkit-text-stroke: .3px;
}
.story { margin: 0 0 70px 960px; white-space: nowrap; }
.story p { margin: 0 0 48px; }
.story p:last-child { margin: 0; }

.results {
  display: grid;
  grid-template-columns: 640px 2100px;
  column-gap: 70px;
  align-items: start;
}
.heading { margin: 11px 0 31px; }
.list {
  list-style: none;
  margin: 0;
  padding: 0;
  border: 2px solid #2f3238;
  border-radius: 8px;
}
.list li { padding: 25px 40px 24px; }
.list li + li { border-top: 2px solid #2f3238; }
.list label { display: block; margin-bottom: 15px; }
.list input {
  display: block;
  font: inherit;
  letter-spacing: inherit;
  outline: none;
}
.plain {
  width: 460px;
  height: 64px;
  padding: 0 6px;
  border: 2px solid #fff;
  border-top-color: #ececec;
  border-bottom-color: #c4c4c6;
  background: #fff;
}
.plain::placeholder { color: #777; opacity: 1; }
.control {
  width: 556px;
  height: 76px;
  padding: 0 24px;
  border: 2px solid #cdd2da;
  border-radius: 8px;
  background: #fff;
  color: #495057;
}
.control::placeholder { color: #6c757d; opacity: 1; }
.focused { border-color: #80bdff; box-shadow: 0 0 0 6px #274b70; }

.sightings {
  width: 2100px;
  table-layout: fixed;
  border-collapse: separate;
  border-spacing: 0;
}
.c1 { width: 193px; }
.c2 { width: 335px; }
.c3 { width: 139px; }
.c4 { width: 185px; }
.c5 { width: 167px; }
.c6 { width: 226px; }
.sightings th,
.sightings td { padding: 25px 0 23px 24px; text-align: left; white-space: nowrap; }
.sightings th {
  border-top: 2px solid #dcdfe5;
  border-bottom: 4px solid #dcdfe5;
  letter-spacing: .45px;
}
.sightings tbody tr:first-child td { background: #32353d; }
.sightings tbody tr + tr td { border-top: 2px solid #dcdfe5; }

/* Dock */
.desk { flex: 1; padding: 4px 95px 10px 94px; }
.dock {
  height: 134px;
  padding-left: 4px;
  display: flex;
  border: 2px solid rgba(205, 205, 235, .36);
  border-radius: 38px;
  background:
    linear-gradient(to bottom, rgba(190, 90, 130, .16), rgba(90, 130, 200, .2)),
    linear-gradient(to right, #5d7dab 0, #6a7daf 600px, #7a7bb1 1100px, #8b79b2 1600px, #9b75af 2050px, #b26ca6 2600px, #b36aa3 2700px);
}
.app {
  position: relative;
  flex: none;
  width: 112px;
  padding: 18px 14px 0;
}
.app > svg { width: 84px; height: 84px; filter: drop-shadow(0 2px 2px rgba(0, 0, 0, .22)); }
.nudge { margin-left: 2px; }
.running::after {
  content: "";
  position: absolute;
  left: 52px;
  top: 120px;
  width: 8px;
  height: 8px;
  border-radius: 50%;
  background: #0b0638;
}
.calendar { display: flex; flex-direction: column; text-align: center; }
.month {
  height: 26px;
  border-radius: 19px 19px 0 0;
  background: linear-gradient(#fb5f5b, #ee514d);
  color: #fff;
  font-weight: 600;
  font-size: 16px;
  line-height: 29px;
}
.day {
  height: 58px;
  border-radius: 0 0 19px 19px;
  background: linear-gradient(#fff, #f6f6f5);
  color: #1c1c1e;
  font-weight: 300;
  font-size: 52px;
  line-height: 54px;
  letter-spacing: -1.5px;
}
.badge {
  position: absolute;
  left: 73px;
  top: 7px;
  width: 41px;
  height: 41px;
  display: flex;
  align-items: center;
  justify-content: center;
  border-radius: 50%;
  background: #f54543;
  box-shadow: 0 1px 3px rgba(0, 0, 0, .3);
  color: #fff;
  font-size: 21px;
}
.badge i { width: 4px; height: 4px; border-radius: 50%; background: #fff; }
.sep { flex: none; width: 2px; height: 98px; margin: 16px 23px 0 25px; background: rgba(66, 45, 105, .7); }
.sep.second { margin: 16px 29px 0 25px; }
.thumb { flex: none; margin: 0; position: relative; }
.terminal { width: 104px; margin: 26px 8px 0 0; }
.terminal svg { width: 104px; height: 68px; }
.code { width: 98px; margin: 23px 26px 0 2px; }
.code svg { width: 98px; height: 84px; }
figcaption {
  position: absolute;
  right: 0;
  top: 66px;
  height: 20px;
  padding: 0 8px;
  border-radius: 10px;
  background: rgba(85, 60, 100, .8);
  color: #fff;
  font-size: 18.5px;
  line-height: 18px;
  letter-spacing: -1px;
  white-space: nowrap;
  text-shadow: 0 2px 2px rgba(0, 0, 0, .6);
}
.trash { margin-top: 10px; }
```
